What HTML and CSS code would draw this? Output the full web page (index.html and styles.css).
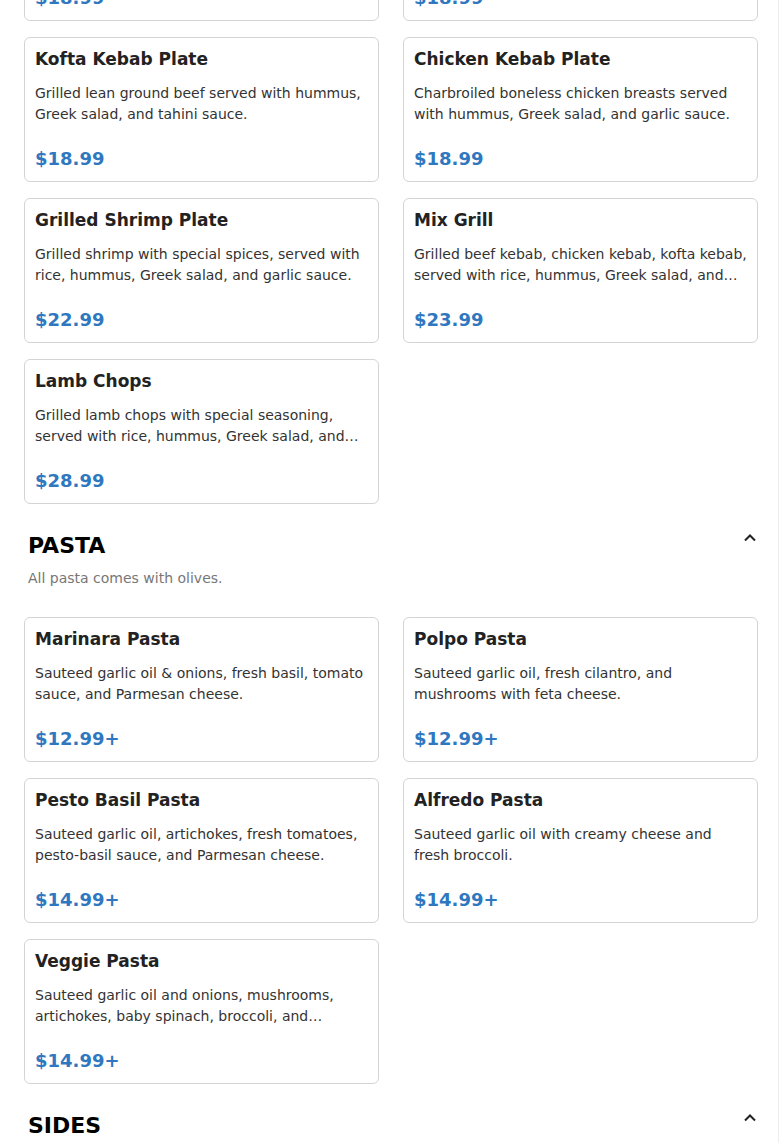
FILE: index.html
```html
<!DOCTYPE html>
<html lang="en">
<head>
  <meta charset="UTF-8">
  <meta name="viewport" content="width=device-width, initial-scale=1.0">
  <title>Menu</title>
  <link rel="stylesheet" href="styles.css">
</head>
<body>

  <div class="page">

    <!-- scrolled: first row sits above the fold -->
    <div class="items items-scrolled">
      <div class="item">
        <div class="item-name">Beef Kebab Plate</div>
        <div class="item-desc">Grilled beef tenderloin served with hummus, Greek salad, and garlic sauce.</div>
        <div class="item-price">$18.99</div>
      </div>
      <div class="item">
        <div class="item-name">Lamb Kebab Plate</div>
        <div class="item-desc">Grilled lamb cubes served with hummus, Greek salad, and tahini sauce.</div>
        <div class="item-price">$18.99</div>
      </div>
      <div class="item">
        <div class="item-name">Kofta Kebab Plate</div>
        <div class="item-desc">Grilled lean ground beef served with hummus, Greek salad, and tahini sauce.</div>
        <div class="item-price">$18.99</div>
      </div>
      <div class="item">
        <div class="item-name">Chicken Kebab Plate</div>
        <div class="item-desc">Charbroiled boneless chicken breasts served with hummus, Greek salad, and garlic sauce.</div>
        <div class="item-price">$18.99</div>
      </div>
      <div class="item">
        <div class="item-name">Grilled Shrimp Plate</div>
        <div class="item-desc">Grilled shrimp with special spices, served with rice, hummus, Greek salad, and garlic sauce.</div>
        <div class="item-price">$22.99</div>
      </div>
      <div class="item">
        <div class="item-name">Mix Grill</div>
        <div class="item-desc">Grilled beef kebab, chicken kebab, kofta kebab, served with rice, hummus, Greek salad, and garlic sauce.</div>
        <div class="item-price">$23.99</div>
      </div>
      <div class="item">
        <div class="item-name">Lamb Chops</div>
        <div class="item-desc">Grilled lamb chops with special seasoning, served with rice, hummus, Greek salad, and garlic sauce.</div>
        <div class="item-price">$28.99</div>
      </div>
    </div>

    <div class="section">
      <div class="section-header">
        <h2>PASTA</h2>
        <svg class="chevron" width="14" height="10" viewBox="0 0 14 10"><path d="M2 7.5 L7 2.5 L12 7.5" fill="none" stroke="#222" stroke-width="2"/></svg>
      </div>
      <p class="section-note">All pasta comes with olives.</p>
    </div>

    <div class="items">
      <div class="item">
        <div class="item-name">Marinara Pasta</div>
        <div class="item-desc">Sauteed garlic oil &amp; onions, fresh basil, tomato sauce, and Parmesan cheese.</div>
        <div class="item-price">$12.99+</div>
      </div>
      <div class="item">
        <div class="item-name">Polpo Pasta</div>
        <div class="item-desc">Sauteed garlic oil, fresh cilantro, and mushrooms with feta cheese.</div>
        <div class="item-price">$12.99+</div>
      </div>
      <div class="item">
        <div class="item-name">Pesto Basil Pasta</div>
        <div class="item-desc">Sauteed garlic oil, artichokes, fresh tomatoes, pesto-basil sauce, and Parmesan cheese.</div>
        <div class="item-price">$14.99+</div>
      </div>
      <div class="item">
        <div class="item-name">Alfredo Pasta</div>
        <div class="item-desc">Sauteed garlic oil with creamy cheese and fresh broccoli.</div>
        <div class="item-price">$14.99+</div>
      </div>
      <div class="item">
        <div class="item-name">Veggie Pasta</div>
        <div class="item-desc">Sauteed garlic oil and onions, mushrooms, artichokes, baby spinach, broccoli, and Parmesan cheese.</div>
        <div class="item-price">$14.99+</div>
      </div>
    </div>

    <div class="section">
      <div class="section-header">
        <h2>SIDES</h2>
        <svg class="chevron" width="14" height="10" viewBox="0 0 14 10"><path d="M2 7.5 L7 2.5 L12 7.5" fill="none" stroke="#222" stroke-width="2"/></svg>
      </div>
      <p class="section-note">Add a side to any plate.</p>
    </div>

  </div>

</body>
</html>
```

FILE: styles.css
```css
body {
  margin: 0;
  font-family: "DejaVu Sans", Verdana, sans-serif;
  color: #222;
  background: linear-gradient(to left, #fff 3px, #ededed 3px, #ededed 4px, #fff 4px);
  overflow: hidden;
}
.page {
  padding: 0 24px;
  height: 1143px;
  overflow: hidden;
}
.items {
  display: grid;
  grid-template-columns: 1fr 1fr;
  gap: 16px 24px;
}
.items-scrolled {
  margin-top: -124px;
}
.item {
  border: 1px solid #d4d4d4;
  border-radius: 6px;
  padding: 10px 10px 11px;
  background: #fff;
}
.item-name {
  font-size: 17px;
  font-weight: bold;
  line-height: 20px;
  margin-top: 1px;
  margin-bottom: 14px;
}
.item-desc {
  font-size: 14px;
  line-height: 21px;
  color: #333;
  display: -webkit-box;
  -webkit-line-clamp: 2;
  -webkit-box-orient: vertical;
  overflow: hidden;
  height: 42px;
}
.item-price {
  margin-top: 23px;
  font-size: 18px;
  font-weight: bold;
  line-height: 22px;
  color: #2f78c0;
}
.section {
  padding: 0 4px;
  margin-top: 28px;
  margin-bottom: 29px;
}
.section-header {
  display: flex;
  justify-content: space-between;
  align-items: flex-start;
}
.section-header h2 {
  margin: 0;
  font-size: 22px;
  line-height: 28px;
  color: #000;
}
.chevron {
  margin-top: 1px;
  margin-right: -3px;
}
.section-note {
  margin: 8px 0 0;
  font-size: 14px;
  line-height: 20px;
  color: #777;
}
```
